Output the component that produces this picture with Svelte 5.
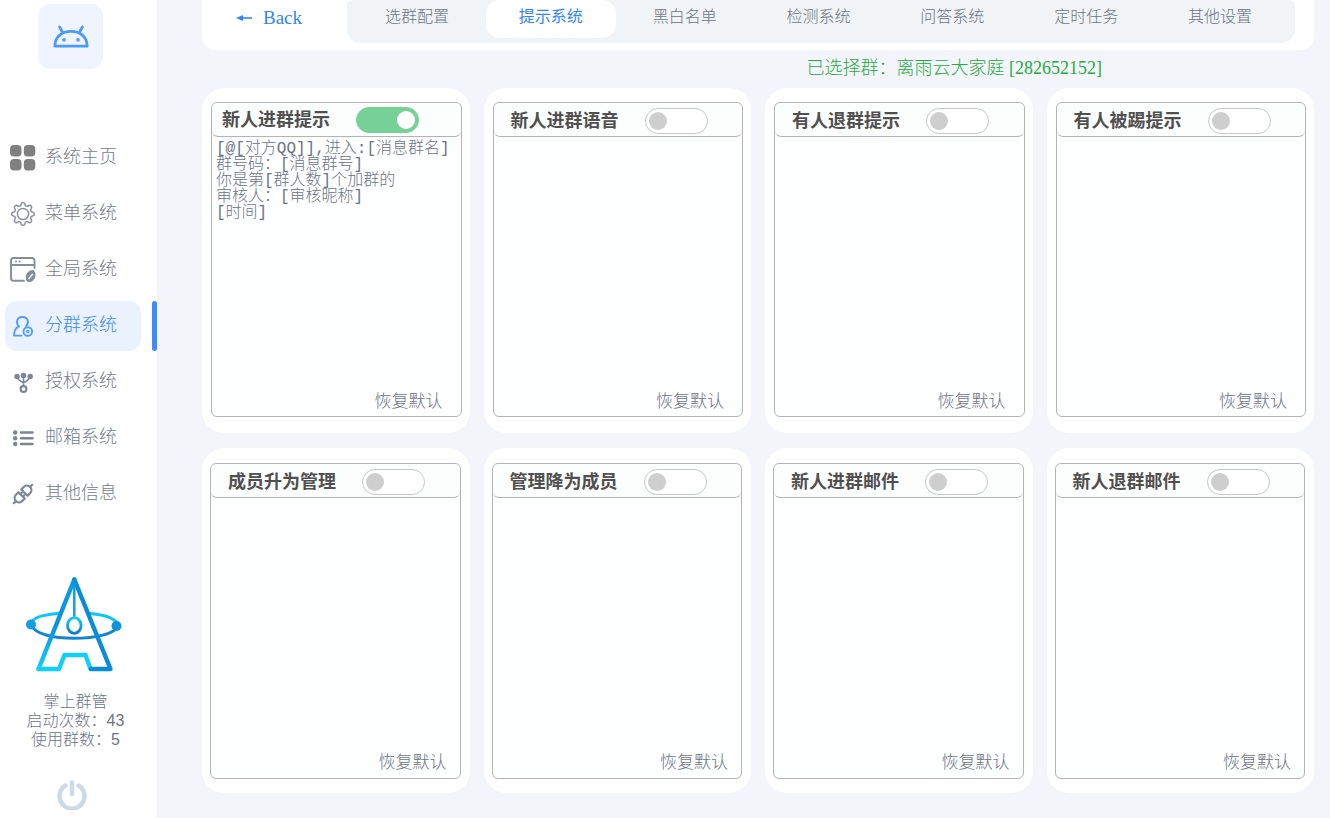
<script>
  const nav = [
    { id: 'home', label: '系统主页' },
    { id: 'menu', label: '菜单系统' },
    { id: 'global', label: '全局系统' },
    { id: 'group', label: '分群系统' },
    { id: 'auth', label: '授权系统' },
    { id: 'mail', label: '邮箱系统' },
    { id: 'info', label: '其他信息' }
  ];
  const tabs = ['选群配置', '提示系统', '黑白名单', '检测系统', '问答系统', '定时任务', '其他设置'];

  // Outline of an eight-toothed gear around (13, 13).
  const gear =
    'M' +
    Array.from({ length: 96 }, (_, k) => {
      const a = (k / 96) * Math.PI * 2;
      const wave = Math.tanh(2 * Math.cos(8 * a));
      const r = 9.9 + 1.4 * wave;
      return `${(13 + r * Math.cos(a)).toFixed(2)} ${(13 + r * Math.sin(a)).toFixed(2)}`;
    }).join('L') +
    'z';

  let page = $state('group');
  let tab = $state('提示系统');
  let cards = $state([
    {
      title: '新人进群提示',
      on: true,
      text: '[@[对方QQ]],进入:[消息群名]\n群号码：[消息群号]\n你是第[群人数]个加群的\n审核人：[审核昵称]\n[时间]'
    },
    { title: '新人进群语音', on: false, text: '' },
    { title: '有人退群提示', on: false, text: '' },
    { title: '有人被踢提示', on: false, text: '' },
    { title: '成员升为管理', on: false, text: '' },
    { title: '管理降为成员', on: false, text: '' },
    { title: '新人进群邮件', on: false, text: '' },
    { title: '新人退群邮件', on: false, text: '' }
  ]);
</script>

{#snippet icon(id)}
  <svg class="icon" viewBox="0 0 26 26" aria-hidden="true">
    {#if id === 'home'}
      <g fill="#808080">
        <rect x="0" y="0" width="11.5" height="11.5" rx="4" />
        <rect x="13.8" y="0" width="11.5" height="11.5" rx="4" />
        <rect x="0" y="14" width="11.5" height="11.5" rx="4" />
        <rect x="13.8" y="14" width="11.5" height="11.5" rx="4" />
      </g>
    {:else if id === 'menu'}
      <g fill="none" stroke="#8b909b" stroke-width="1.5" stroke-linejoin="round">
        <circle cx="13" cy="13" r="5.6" />
        <path d={gear} />
      </g>
    {:else if id === 'global'}
      <g fill="none" stroke="#858c9a" stroke-width="1.9" stroke-linecap="round">
        <path d="M14 23.8H3.5a2.5 2.5 0 0 1-2.5-2.5V3.5a2.5 2.5 0 0 1 2.5-2.5h18.5a2.5 2.5 0 0 1 2.5 2.5V11M1 8h23.5" />
      </g>
      <circle cx="6" cy="4.6" r="1" fill="#858c9a" />
      <circle cx="9.6" cy="4.6" r="1" fill="#858c9a" />
      <path d="M24 13.5c2 2 2 7-.5 9.500s-5 2.500-6.500 1.500c-2-2-1.500-7 .5-9s4.500-3 6.500-2z" fill="#858c9a" />
      <path d="M18.5 22l4.3-5" stroke="#fff" stroke-width="1.3" />
    {:else if id === 'group'}
      <g fill="none" stroke="#549bff" stroke-width="1.9" stroke-linecap="round" stroke-linejoin="round">
        <path d="M11.5 22.600H4c0-5 2-8 5-9.300C6 11 6 4 12.300 4s7 6.500 3.700 9" />
        <circle cx="17.8" cy="18.5" r="4.3" />
        <circle cx="17.8" cy="18.5" r="1" stroke-width="1.4" />
      </g>
    {:else if id === 'auth'}
      <g fill="none" stroke="#7d8696" stroke-width="1.5">
        <path d="M13.5 6v11M7 7c1 4 3.500 5.500 6.500 6.500C16.500 12.500 19 11 20 7" />
        <circle cx="13.5" cy="20" r="2.9" stroke-width="2.1" />
      </g>
      <g fill="#7d8696">
        <circle cx="7" cy="7.5" r="2.7" />
        <circle cx="13.5" cy="6.5" r="2.8" />
        <circle cx="20.2" cy="7.5" r="2.7" />
      </g>
    {:else if id === 'mail'}
      <g stroke="#7d8696" stroke-width="2.6" stroke-linecap="round">
        <path d="M11 7.500h11.500M11 13.300h11.500M11 19h11.500" />
      </g>
      <g fill="#7d8696">
        <circle cx="5.2" cy="7.5" r="2.2" />
        <circle cx="5.2" cy="13.3" r="2.2" />
        <circle cx="5.2" cy="19" r="2.2" />
      </g>
    {:else}
      <g transform="rotate(-45 13 13)" fill="none" stroke="#7d8696" stroke-width="2.2" stroke-linecap="round" stroke-linejoin="round">
        <path d="M0 13h2.500M23.500 13H26" />
        <path d="M11 8.500H7.500a4.500 4.500 0 0 0 0 9H11zM11 11.300h2M11 14.700h2" />
        <path d="M15 8.500h3.500a4.500 4.500 0 0 1 0 9H15z" />
      </g>
    {/if}
  </svg>
{/snippet}

<div class="app">
  <aside>
    <div class="badge">
      <svg viewBox="0 0 38 26" aria-hidden="true">
        <g fill="none" stroke="#4e9af7" stroke-width="2.8" stroke-linecap="round" stroke-linejoin="round">
          <path d="M2.800 22.200C3 12.500 10 7.300 19 7.300s16 5.200 16.200 14.900z" />
          <path d="M10.300 7.800L7.600 3M27.700 7.800L30.400 3" />
        </g>
        <circle cx="12" cy="15.8" r="1.9" fill="#5b9ff5" />
        <circle cx="26" cy="15.8" r="1.9" fill="#5b9ff5" />
      </svg>
    </div>

    <nav>
      {#each nav as item}
        <div class="slot" class:active={page === item.id}>
          <button class="item" onclick={() => (page = item.id)}>
            {@render icon(item.id)}
            <span>{item.label}</span>
          </button>
        </div>
      {/each}
    </nav>

    <svg class="logo" viewBox="0 0 96 98" aria-hidden="true">
      <defs>
        <linearGradient id="leg" gradientUnits="userSpaceOnUse" x1="0" y1="93" x2="0" y2="3">
          <stop offset="0" stop-color="#10cffa" />
          <stop offset="0.5" stop-color="#0c90dc" />
          <stop offset="1" stop-color="#0aa0e6" />
        </linearGradient>
        <linearGradient id="ring" x1="0" y1="0" x2="0" y2="1">
          <stop offset="0" stop-color="#10cdfa" />
          <stop offset="1" stop-color="#0b7dcc" />
        </linearGradient>
      </defs>
      <g fill="none" stroke-linecap="round" stroke-linejoin="round">
        <path d="M33 37.500C17 38.500 6 42 5 48M64 37.500c17 1.500 27 5.500 28 12.500" stroke="#0bc6f7" stroke-width="3" />
        <path d="M5 49c4 9 22 13.300 43 13.300S89 58 92 50" stroke="#1685d0" stroke-width="3" />
        <path d="M48.300 3.500L12.500 93" stroke="url(#leg)" stroke-width="4.4" />
        <path d="M12.500 93H33L38.500 79H59.500L64.500 93" stroke="#10cffa" stroke-width="4.4" />
        <path d="M48.300 3.500L84.500 93H65" stroke="#0b8cd8" stroke-width="4.4" />
        <path d="M48.300 8v32" stroke="#0d9be0" stroke-width="2.4" />
        <ellipse cx="48.3" cy="49.5" rx="6.8" ry="7.8" stroke="url(#ring)" stroke-width="2.8" />
      </g>
      <circle cx="5" cy="48.5" r="5" fill="#0fa0e4" />
      <circle cx="90.5" cy="50" r="5" fill="#0f94dc" />
    </svg>

    <div class="stats">
      <div>掌上群管</div>
      <div>启动次数：43</div>
      <div>使用群数：5</div>
    </div>

    <button class="power" aria-label="退出">
      <svg viewBox="0 0 30 30" aria-hidden="true">
        <path d="M8.500 5.500a12.500 12.500 0 1 0 13 0M15 2.500v11.500" fill="none" stroke="#ccd9e6" stroke-width="4.4" stroke-linecap="round" />
      </svg>
    </button>
  </aside>

  <main>
    <header>
      <button class="back">
        <svg viewBox="0 0 16 10" aria-hidden="true">
          <path d="M0 5l7-3v6z" fill="#2f86f6" />
          <path d="M5 5h11" stroke="#2f86f6" stroke-width="1.6" />
        </svg>
        <span>Back</span>
      </button>
      <div class="tabs">
        {#each tabs as name}
          <button class="tab" class:current={tab === name} onclick={() => (tab = name)}>{name}</button>
        {/each}
      </div>
    </header>

    <p class="selected">已选择群：离雨云大家庭 [282652152]</p>

    <section class="grid">
      {#each cards as card, i}
        <article class="card" class:lower={i > 3}>
          <div class="panel">
            <div class="head" class:on={card.on}>
              <label for="switch-{i}">{card.title}</label>
              <input id="switch-{i}" type="checkbox" bind:checked={card.on} />
            </div>
            <textarea aria-label={card.title} bind:value={card.text} spellcheck="false"></textarea>
            <button class="reset" onclick={() => (card.text = '')}>恢复默认</button>
          </div>
        </article>
      {/each}
    </section>
  </main>
</div>

<style>
  :global(body) {
    background: #f4f5fa;
  }
  .app {
    display: flex;
    min-height: 100vh;
    color: #6c7485;
    font-family: 'Liberation Serif', 'Noto Sans CJK SC', sans-serif;
    font-size: 16px;
    font-weight: 300;
  }
  .app :global(*) {
    box-sizing: border-box;
  }
  button {
    margin: 0;
    padding: 0;
    border: 0;
    background: none;
    color: inherit;
    font: inherit;
    cursor: pointer;
  }
  svg {
    display: block;
  }

  aside {
    display: flex;
    flex: none;
    flex-direction: column;
    width: 157px;
    padding: 4px 0 8px;
    background: #fff;
  }
  .badge {
    display: grid;
    place-items: center;
    width: 65px;
    height: 65px;
    margin-left: 38px;
    border-radius: 12px;
    background: #eff4ff;
  }
  .badge svg {
    width: 38px;
    height: 26px;
  }
  nav {
    display: flex;
    flex-direction: column;
    gap: 6px;
    margin-top: 64px;
  }
  .slot {
    display: flex;
    justify-content: space-between;
    padding-left: 5px;
  }
  .slot.active::after {
    width: 5px;
    border-radius: 3px;
    background: #4189ff;
    content: '';
  }
  .item {
    display: flex;
    align-items: center;
    gap: 9px;
    width: 136px;
    height: 50px;
    padding-left: 5px;
    border-radius: 12px;
    color: #757c8b;
    font-size: 18px;
    line-height: 24px;
  }
  .item span {
    padding-bottom: 3px;
  }
  .active .item {
    background: #eaf2ff;
    color: #3d88f8;
  }
  .icon {
    width: 26px;
    height: 26px;
  }
  .logo {
    width: 96px;
    height: 98px;
    margin: 57px 0 0 26px;
  }
  .stats {
    margin-top: 18px;
    padding-right: 6px;
    font-family: 'Liberation Sans', 'Noto Sans CJK SC', sans-serif;
    line-height: 19px;
    text-align: center;
  }
  .power {
    width: 30px;
    height: 30px;
    margin: auto 0 0 57px;
  }

  main {
    display: flex;
    flex: 1;
    flex-direction: column;
    min-width: 0;
    padding: 0 16px 25px 45px;
  }
  header {
    display: flex;
    padding: 0 19px 7px 0;
    border-radius: 0 0 14px 14px;
    background: #fff;
  }
  .back {
    display: flex;
    flex: none;
    align-items: center;
    gap: 11px;
    width: 145px;
    padding: 0 0 7px 34px;
    color: #2f86f6;
    font-size: 19px;
    font-weight: 400;
  }
  .back svg {
    width: 16px;
    height: 10px;
  }
  .tabs {
    display: flex;
    flex: 1;
    gap: 4px;
    padding: 0 10px 5px 5px;
    border-radius: 6px 6px 14px 14px;
    background: #f0f4f7;
  }
  .tab {
    flex: 1;
    height: 38px;
    padding-bottom: 8px;
    border-radius: 14px;
  }
  .tab.current {
    background: #fff;
    color: #2f86f6;
    font-weight: 400;
  }
  .selected {
    margin: 5px 212px 7px 0;
    color: #25ab3f;
    font-size: 18px;
    line-height: 26px;
    text-align: right;
  }

  .grid {
    display: grid;
    flex: 1;
    grid-auto-rows: 1fr;
    grid-template-columns: repeat(4, 1fr);
    gap: 15px 14px;
  }
  .card {
    display: flex;
    padding: 14px 8px 16px 9px;
    border-radius: 22px;
    background: #fff;
  }
  .lower {
    padding: 15px 9px 14px 8px;
  }
  .panel {
    display: flex;
    flex: 1;
    flex-direction: column;
    min-width: 0;
    border: 1px solid #b4b4b4;
    border-radius: 6px;
    background: #fdfefe;
  }
  .head {
    display: flex;
    flex: none;
    align-items: center;
    gap: 26px;
    height: 34px;
    padding: 3px 0 0 17px;
    border-bottom: 1px solid #b4b4b4;
    border-radius: 6px;
    background: #fcfdfd;
    color: #505050;
    font-size: 18px;
    font-weight: 700;
    line-height: 24px;
    white-space: nowrap;
  }
  .head.on {
    padding: 0 0 0 10px;
  }
  input {
    display: flex;
    flex: none;
    align-items: center;
    width: 63px;
    height: 26px;
    margin: 0;
    padding: 0 3px;
    appearance: none;
    border: 1px solid #c8c8c8;
    border-radius: 13px;
    background: #fff;
    cursor: pointer;
  }
  input::before {
    width: 18px;
    height: 18px;
    border-radius: 50%;
    background: #cecece;
    content: '';
  }
  input:checked {
    justify-content: flex-end;
    border-color: #75d196;
    background: #75d196;
  }
  input:checked::before {
    background: #fff;
  }
  textarea {
    flex: 1;
    width: 100%;
    min-height: 80px;
    margin: 0;
    padding: 4px;
    resize: none;
    border: 0;
    outline: 0;
    background: none;
    color: #6c7485;
    font-family: 'Liberation Mono', 'Noto Sans CJK SC', monospace;
    font-size: 16px;
    font-weight: 300;
    line-height: 16px;
  }
  .reset {
    align-self: flex-end;
    margin: 0 18px 2px 0;
    font-size: 17px;
    line-height: 25px;
  }
  .lower .reset {
    margin: 0 13px 3px 0;
  }
</style>
